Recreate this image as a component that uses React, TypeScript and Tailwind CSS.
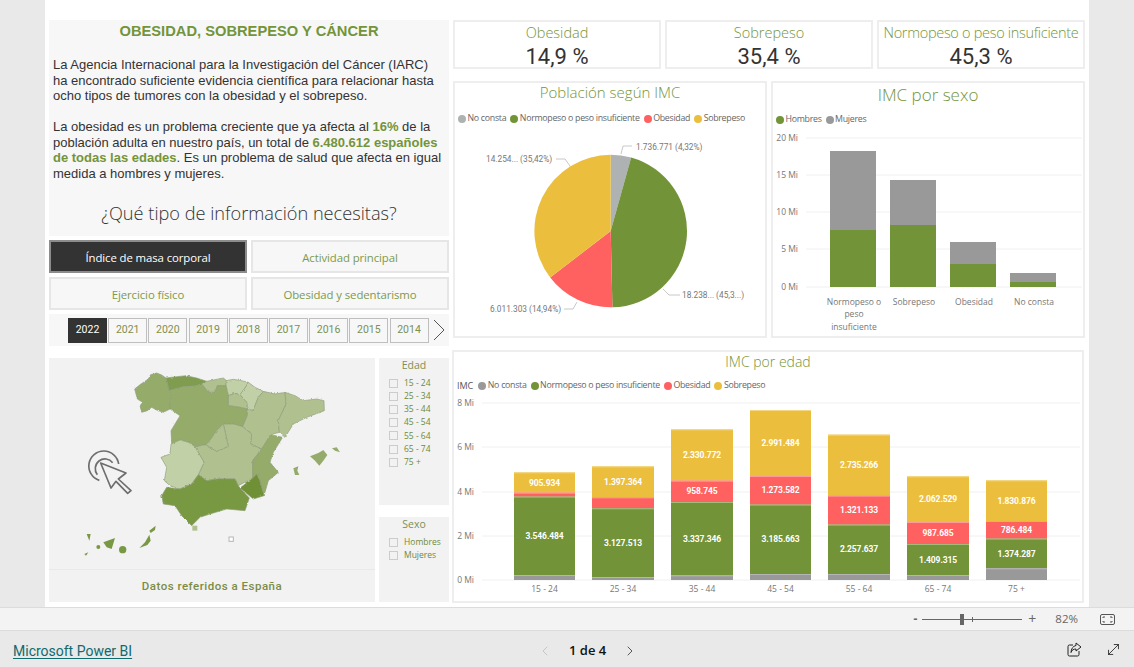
import { ChevronLeft, MoveDiagonal, ChevronRight } from "lucide-react";

const GREEN = "#729337";
const GRAY = "#999999";
const RED = "#ff6161";
const YELLOW = "#ebbe3e";

const segoe = "font-['Open_Sans',sans-serif]";
const din = "font-['Roboto',sans-serif]";

function Legend({ items, className }: { items: [string, string][]; className: string }) {
  return (
    <div className={`flex items-center whitespace-nowrap text-[8.8px] text-[#666666] ${segoe} ${className}`}>
      {items.map(([label, color]) => (
        <span key={label} className="mr-[4px] flex items-center gap-[1.5px]">
          <span className="h-[8px] w-[8px] rounded-full" style={{ backgroundColor: color }} />
          <span className="tracking-[-0.28px]">{label}</span>
        </span>
      ))}
    </div>
  );
}

function Kpi({ title, value, tight }: { title: string; value: string; tight?: boolean }) {
  return (
    <div className="flex h-[49px] w-[208px] flex-col items-center border-2 border-[#eeeeee] bg-white">
      <div className={`h-[21px] text-[14.5px] font-light leading-[21px] text-[#749439] ${segoe} ${tight ? "tracking-[-0.3px]" : ""}`}>
        {title}
      </div>
      <div className={`mt-[1px] text-[22px] leading-[25px] text-[#333333] ${din}`}>{value}</div>
    </div>
  );
}

function Slicer({ title, items, className }: { title: string; items: string[]; className: string }) {
  return (
    <div className={`w-[70px] bg-[#f2f2f2] ${className}`}>
      <div className={`h-[14px] text-center text-[10.5px] leading-[14px] text-[#7d8f52] ${segoe}`}>{title}</div>
      <div className="mt-[5px] pl-[10px]">
        {items.map((item) => (
          <div key={item} className="flex h-[13.1px] items-center gap-[6px]">
            <span className="h-[9px] w-[9px] border border-[#cccccc]" />
            <span className={`text-[8.5px] text-[#6f8a3a] ${segoe}`}>{item}</span>
          </div>
        ))}
      </div>
    </div>
  );
}

const years = ["2022", "2021", "2020", "2019", "2018", "2017", "2016", "2015", "2014"];

function SpainMap() {
  const c1 = "#c2d0a7";
  const c2 = "#b0c08f";
  const c3 = "#94ab6b";
  const c4 = "#7f9c4f";
  const c5 = "#799843";
  const c6 = "#6f9035";
  const regions: [string, string][] = [
    // Galicia, Asturias, Cantabria, Pais Vasco, Navarra, La Rioja
    ["224,75 240,62 265,45 272,32 290,27 305,33 318,42 328,80 335,95 330,115 330,135 310,145 290,138 275,130 262,140 245,145 240,125 248,115 232,105", c3],
    ["318,42 350,38 378,35 410,42 440,52 425,60 405,66 370,68 345,75 328,80", c4],
    ["425,60 440,52 465,47 490,42 500,50 498,65 472,65 465,85 445,85", c2],
    ["498,50 520,46 545,50 565,55 555,72 540,92 525,88 505,95 498,65", c1],
    ["565,55 585,70 610,82 595,100 585,125 578,140 562,130 560,115 540,92 555,72", c1],
    ["505,95 525,88 540,92 560,115 562,135 540,130 505,125", c2],
    // Castilla y Leon
    ["328,80 345,75 370,68 405,66 425,60 445,85 465,85 472,65 498,65 505,95 505,125 540,130 562,135 562,155 548,188 520,180 490,180 470,200 448,232 438,242 405,248 385,235 360,228 335,240 333,200 360,155 345,145 330,135 330,115 335,95", c3],
    // Aragon, Cataluna
    ["610,82 645,90 675,85 678,120 655,170 658,205 632,212 605,255 572,240 575,210 548,188 562,155 562,135 578,140 585,125 595,100", c2],
    ["675,85 705,95 730,110 770,105 792,110 793,140 740,160 700,180 675,220 658,205 655,170 678,120", c2],
    // Castilla-La Mancha, Madrid, Extremadura
    ["490,180 520,180 548,188 575,210 572,240 605,255 578,290 578,342 535,365 525,345 470,345 440,350 415,332 432,295 405,248 438,242 470,262 505,247", c2],
    ["490,180 505,247 470,262 438,242 448,232 470,200", c2],
    ["360,228 385,235 405,248 432,295 415,332 395,360 360,375 330,365 313,350 320,310 303,280 330,270 333,240", c1],
    // Valencia, Murcia, Andalucia
    ["632,212 668,220 640,265 630,295 655,325 625,350 612,395 600,350 590,330 578,342 578,290 605,255", c3],
    ["590,330 600,350 612,395 580,405 540,372 578,342", c6],
    ["415,332 440,350 470,345 525,345 535,365 540,372 568,402 555,440 500,435 450,450 420,460 395,485 365,455 345,425 310,420 305,395 320,370 360,375 395,360", c5],
  ];
  return (
    <svg width="326" height="211" viewBox="0 0 978 633" className="block">
      <defs>
        <filter id="rough">
          <feTurbulence type="fractalNoise" baseFrequency="0.12" numOctaves="2" seed="4" />
          <feDisplacementMap in="SourceGraphic" scale="7" xChannelSelector="R" yChannelSelector="G" />
        </filter>
      </defs>
      <g transform="translate(33,18)">
        <g filter="url(#rough)">
          {regions.map(([points, fill], i) => (
            <polygon key={i} points={points} fill={fill} stroke="#909f7a" strokeWidth="2" strokeLinejoin="round" />
          ))}
        </g>
        <rect x="397" y="485" width="15" height="15" fill={c2} />
        <rect x="507" y="519" width="13" height="13" fill="#ffffff" stroke="#b5b5b5" strokeWidth="3" />
        <g fill={c5}>
          <polygon points="80,510 92,510 88,530" />
          <circle cx="115" cy="549" r="6" />
          <polygon points="130,535 165,522 155,555 140,550" />
          <circle cx="188" cy="557" r="11" />
          <polygon points="238,552 255,535 268,512 272,530 262,543" />
          <polygon points="268,500 287,485 285,498 272,507" />
          <polygon points="73,570 85,565 78,575" />
        </g>
        <g fill={c3}>
          <polygon points="750,277 775,267 790,258 802,273 790,290 778,305 765,290" />
          <polygon points="816,253 830,250 840,265 825,260" />
          <polygon points="700,313 715,307 712,320 718,333 705,333" />
        </g>
        <g fill="none" stroke="#6e6e6e" strokeWidth="5">
          <path d="M118 349 A45 45 0 1 1 176 300" />
          <path d="M112 332 A28 28 0 1 1 158 296" />
          <polygon points="122,297 198,327 175,345 213,380 203,388 168,352 153,372" fill="#f2f2f2" strokeLinejoin="round" />
        </g>
      </g>
    </svg>
  );
}

function PieChart() {
  const cx = 610.7;
  const cy = 231;
  const r = 76.3;
  const slices: [number, string][] = [
    [4.32, "#aeb2b3"],
    [45.32, GREEN],
    [14.94, RED],
    [35.42, YELLOW],
  ];
  let acc = 0;
  const paths = slices.map(([pct, color]) => {
    const a0 = (acc / 100) * 2 * Math.PI;
    acc += pct;
    const a1 = (acc / 100) * 2 * Math.PI;
    const d = `M${cx} ${cy} L${cx + r * Math.sin(a0)} ${cy - r * Math.cos(a0)} A${r} ${r} 0 ${pct > 50 ? 1 : 0} 1 ${cx + r * Math.sin(a1)} ${cy - r * Math.cos(a1)} Z`;
    return <path key={color} d={d} fill={color} />;
  });
  const label = "font-['Roboto',sans-serif] text-[8.3px] fill-[#777777]";
  return (
    <svg width="310" height="212" className="block">
      <g transform="translate(-455,-124)">
        {paths}
        <g fill="none" stroke="#c8c8c8">
          <path d="M621 154 L623 146 L632 146" />
          <path d="M570 166 L565 159 L556 159" />
          <path d="M663 289 L669 295 L680 295" />
          <path d="M577 302 L573 309 L564 309" />
        </g>
        <text x="636" y="150" className={label}>1.736.771 (4,32%)</text>
        <text x="486" y="162" className={label}>14.254... (35,42%)</text>
        <text x="682" y="298" className={label}>18.238... (45,3...)</text>
        <text x="490" y="312" className={label}>6.011.303 (14,94%)</text>
      </g>
    </svg>
  );
}

function SexoChart() {
  const grid: [number, string][] = [
    [138, "20 Mi"],
    [175, "15 Mi"],
    [212, "10 Mi"],
    [249, "5 Mi"],
    [287, "0 Mi"],
  ];
  const bars = [
    [830, 151, 230],
    [890, 180, 225],
    [950, 242, 264],
    [1010, 273, 282],
  ];
  const text = "font-['Open_Sans',sans-serif] text-[8.5px] fill-[#777777]";
  return (
    <svg width="310" height="211" className="block">
      <g transform="translate(-773,-125)">
        {grid.map(([y, t]) => (
          <g key={t}>
            <line x1="806" x2="1082" y1={y} y2={y} stroke="#f0f0f0" strokeWidth="1" />
            <text x="798" y={y + 3} textAnchor="end" className={text}>{t}</text>
          </g>
        ))}
        {bars.map(([x, top, mid]) => (
          <g key={x}>
            <rect x={x} y={top} width="46" height={mid - top} fill={GRAY} />
            <rect x={x} y={mid} width="46" height={287 - mid} fill={GREEN} />
          </g>
        ))}
        <text textAnchor="middle" className={text}>
          <tspan x="854" y="305">Normopeso o</tspan>
          <tspan x="854" y="317">peso</tspan>
          <tspan x="854" y="330">insuficiente</tspan>
        </text>
        <text x="914" y="305" textAnchor="middle" className={text}>Sobrepeso</text>
        <text x="974" y="305" textAnchor="middle" className={text}>Obesidad</text>
        <text x="1034" y="305" textAnchor="middle" className={text}>No consta</text>
      </g>
    </svg>
  );
}

function EdadChart() {
  const grid: [number, string][] = [
    [403, "8 Mi"],
    [447, "6 Mi"],
    [492, "4 Mi"],
    [536, "2 Mi"],
    [580, "0 Mi"],
  ];
  // zoomed y stops: top of yellow, red, green, gray (divide by 3, add 345)
  const bars: { x: number; w: number; label: string; y: number[]; v: string[] }[] = [
    { x: 514, w: 61, label: "15 - 24", y: [382, 443, 455, 690], v: ["905.934", "", "3.546.484"] },
    { x: 592, w: 62, label: "25 - 34", y: [364, 457, 490, 696], v: ["1.397.364", "", "3.127.513"] },
    { x: 671, w: 62, label: "35 - 44", y: [253, 407, 471, 691], v: ["2.330.772", "958.745", "3.337.346"] },
    { x: 750, w: 61, label: "45 - 54", y: [195, 393, 479, 687], v: ["2.991.484", "1.273.582", "3.185.663"] },
    { x: 828, w: 62, label: "55 - 64", y: [269, 452, 539, 687], v: ["2.735.266", "1.321.133", "2.257.637"] },
    { x: 907, w: 62, label: "65 - 74", y: [394, 531, 597, 690], v: ["2.062.529", "987.685", "1.409.315"] },
    { x: 986, w: 61, label: "75 +", y: [406, 528, 581, 670], v: ["1.830.876", "786.484", "1.374.287"] },
  ];
  const colors = [YELLOW, RED, GREEN, GRAY];
  const strokes = ["#f3d782", "#ff9a9a", "#a3bb78", "#b5b5b5"];
  const axis = "font-['Open_Sans',sans-serif] text-[8.5px] fill-[#777777]";
  const value = "font-['Roboto',sans-serif] text-[8.5px] font-bold fill-white tracking-[-0.1px]";
  const py = (z: number) => z / 3 + 345;
  return (
    <svg width="628" height="210" className="block">
      <g transform="translate(-454,-391)">
        {grid.map(([y, t]) => (
          <g key={t}>
            <line x1="482" x2="1080" y1={y} y2={y} stroke="#f0f0f0" strokeWidth="1" />
            <text x="474" y={y + 3} textAnchor="end" className={axis}>{t}</text>
          </g>
        ))}
        {bars.map((b) => (
          <g key={b.x}>
            {b.y.map((z, i) => {
              const y0 = py(z);
              const y1 = i < 3 ? py(b.y[i + 1]) : 580;
              return (
                <g key={i}>
                  <rect x={b.x} y={y0} width={b.w} height={y1 - y0} fill={colors[i]} />
                  <line x1={b.x} x2={b.x + b.w} y1={y0 + 0.5} y2={y0 + 0.5} stroke={strokes[i]} />
                  {b.v[i] ? (
                    <text x={b.x + b.w / 2} y={(y0 + y1) / 2 + 3} textAnchor="middle" className={value}>{b.v[i]}</text>
                  ) : null}
                </g>
              );
            })}
            <text x={b.x + b.w / 2} y="592" textAnchor="middle" className={axis}>{b.label}</text>
          </g>
        ))}
      </g>
    </svg>
  );
}

function ChoiceButton({ label, active }: { label: string; active?: boolean }) {
  return (
    <div
      className={`flex h-[33px] items-center justify-center border-2 pt-[3px] text-[11.4px] tracking-[-0.1px] ${segoe} ${
        active ? "border-[#8c8c8c] bg-[#333333] text-white" : "border-[#e6e6e6] bg-[#f7f7f7] text-[#7d9a4c]"
      }`}
    >
      {label}
    </div>
  );
}

export default function App() {
  return (
    <div className="flex h-[667px] w-[1134px] flex-col overflow-hidden bg-[#e9e9e9]">
      {/* Report canvas */}
      <div className="mx-[45px] flex h-[607px] w-[1044px] gap-[4px] bg-white pl-[4px] pt-[20px]">
        {/* Left column */}
        <div className="flex w-[400px] flex-col">
          <div className="h-[216px] bg-[#f7f7f7] pl-[4px] font-['Liberation_Sans',sans-serif]">
            <h1 className="pr-[4px] pt-[3px] text-center text-[14.7px] font-bold leading-[17px] text-[#749439]">
              OBESIDAD, SOBREPESO Y CÁNCER
            </h1>
            <p className="mt-[17px] whitespace-nowrap text-[13px] leading-[15.5px] text-[#333333]">
              La Agencia Internacional para la Investigación del Cáncer (IARC)
              <br />
              ha encontrado suficiente evidencia científica para relacionar hasta
              <br />
              ocho tipos de tumores con la obesidad y el sobrepeso.
            </p>
            <p className="mt-[15.5px] whitespace-nowrap text-[13px] leading-[15.5px] text-[#333333]">
              La obesidad es un problema creciente que ya afecta al <b className="text-[#749439]">16%</b> de la
              <br />
              población adulta en nuestro país, un total de <b className="text-[#749439]">6.480.612 españoles</b>
              <br />
              <b className="text-[#749439]">de todas las edades</b>. Es un problema de salud que afecta en igual
              <br />
              medida a hombres y mujeres.
            </p>
            <div className={`mt-[18px] pr-[4px] text-center text-[18.2px] font-light leading-[28px] text-[#333333] ${segoe}`}>
              ¿Qué tipo de información necesitas?
            </div>
          </div>
          <div className="mt-[4px] grid grid-cols-[198px_198px] gap-[4px]">
            <ChoiceButton label="Índice de masa corporal" active />
            <ChoiceButton label="Actividad principal" />
            <ChoiceButton label="Ejercicio físico" />
            <ChoiceButton label="Obesidad y sedentarismo" />
          </div>
          <div className="mt-[4px] flex h-[32px] items-center gap-[1.2px] bg-[#f7f7f7] pl-[19px]">
            {years.map((y, i) => (
              <div
                key={y}
                className={`flex h-[25px] w-[39px] items-center justify-center border text-[10.5px] ${din} ${
                  i === 0 ? "border-[#333333] bg-[#333333] text-white" : "border-[#bfbfbf] bg-[#f7f7f7] text-[#7d8f52]"
                }`}
              >
                {y}
              </div>
            ))}
            <svg width="12" height="22" viewBox="0 0 12 22" fill="none" stroke="#555555" className="ml-[3px]">
              <path d="M1 1L11 11L1 21" />
            </svg>
          </div>
          <div className="mt-[12px] flex h-[244px] gap-[4px]">
            <div className="flex w-[326px] flex-col bg-[#f2f2f2]">
              <SpainMap />
              <div className={`flex flex-1 items-center justify-center border-t border-[#e9e9e9] pt-[1px] text-[11.5px] font-medium tracking-[0.5px] text-[#7c8c46] ${din}`}>
                Datos referidos a España
              </div>
            </div>
            <div className="flex w-[70px] flex-col">
              <Slicer
                title="Edad"
                items={["15 - 24", "25 - 34", "35 - 44", "45 - 54", "55 - 64", "65 - 74", "75 +"]}
                className="h-[147px]"
              />
              <Slicer title="Sexo" items={["Hombres", "Mujeres"]} className="mt-[12px] h-[85px]" />
            </div>
          </div>
        </div>

        {/* Right column */}
        <div className="flex w-[632px] flex-col">
          <div className="flex gap-[4px]">
            <Kpi title="Obesidad" value="14,9 %" />
            <Kpi title="Sobrepeso" value="35,4 %" />
            <Kpi title="Normopeso o peso insuficiente" value="45,3 %" tight />
          </div>
          <div className="mt-[12px] flex gap-[4px]">
            <div className="h-[257px] w-[314px] border-2 border-[#eeeeee]">
              <div className={`h-[20px] text-center text-[15px] font-light leading-[18px] text-[#749439] ${segoe}`}>
                Población según IMC
              </div>
              <Legend
                className="mt-[10px] h-[11px] pl-[3px]"
                items={[
                  ["No consta", "#aeb2b3"],
                  ["Normopeso o peso insuficiente", GREEN],
                  ["Obesidad", RED],
                  ["Sobrepeso", YELLOW],
                ]}
              />
              <PieChart />
            </div>
            <div className="h-[257px] w-[314px] border-2 border-[#eeeeee]">
              <div className={`h-[24px] text-center text-[17px] font-light leading-[24px] text-[#749439] ${segoe}`}>
                IMC por sexo
              </div>
              <Legend
                className="mt-[7px] h-[11px] pl-[3px]"
                items={[
                  ["Hombres", GREEN],
                  ["Mujeres", GRAY],
                ]}
              />
              <SexoChart />
            </div>
          </div>
          <div className="ml-[-1px] mt-[12px] h-[253px] w-[632px] border-2 border-[#eeeeee]">
            <div className={`h-[18px] text-center text-[14px] font-light leading-[20px] text-[#749439] ${segoe}`}>
              IMC por edad
            </div>
            <div className="mt-[10px] flex h-[11px] items-center">
              <span className={`ml-[3px] mr-[5px] text-[9px] text-[#555555] ${segoe}`}>IMC</span>
              <Legend
                className=""
                items={[
                  ["No consta", GRAY],
                  ["Normopeso o peso insuficiente", GREEN],
                  ["Obesidad", RED],
                  ["Sobrepeso", YELLOW],
                ]}
              />
            </div>
            <EdadChart />
          </div>
        </div>
      </div>

      {/* Zoom bar */}
      <div className="flex h-[24px] items-center justify-end border-y border-[#dcdcdc] bg-[#f3f3f3] pr-[19px] text-[#666666]">
        <span className="mr-[5px] text-[12px] font-bold leading-none">-</span>
        <div className="relative h-[1px] w-[100px] bg-[#666666]">
          <span className="absolute left-[38px] top-[-5px] h-[11px] w-[4px] bg-[#666666]" />
          <span className="absolute left-[50px] top-[-2px] h-[5px] w-[1px] bg-[#666666]" />
        </div>
        <span className={`ml-[6px] text-[14px] leading-none ${segoe}`}>+</span>
        <span className={`ml-[19px] text-[11.5px] ${segoe}`}>82%</span>
        <svg width="15" height="11" viewBox="0 0 15 11" fill="none" stroke="#555555" className="ml-[22px]">
          <rect x="0.5" y="0.5" width="14" height="10" rx="1.5" />
          <path d="M3 4V3H5M10 3H12V4M12 7V8H10M5 8H3V7" />
        </svg>
      </div>

      {/* Footer */}
      <div className="relative flex flex-1 items-center">
        <a className={`ml-[13px] mt-[5px] text-[14px] text-[#0f6b6f] underline underline-offset-2 ${din}`}>Microsoft Power BI</a>
        <div className="absolute left-[537px] top-[10px] flex items-center">
          <ChevronLeft className="h-[16px] w-[16px] text-[#bdbdbd]" strokeWidth={1.2} />
          <span className="ml-[16px] text-[13px] font-semibold text-[#111111] font-['Open_Sans',sans-serif]">1 de 4</span>
          <ChevronRight className="ml-[16px] h-[16px] w-[16px] text-[#333333]" strokeWidth={1.2} />
        </div>
        <svg width="15" height="15" viewBox="0 0 15 15" fill="none" stroke="#222222" className="absolute left-[1067px]">
          <path d="M6 3H2.5A1.5 1.5 0 0 0 1 4.5V12.5A1.5 1.5 0 0 0 2.5 14H10.5A1.5 1.5 0 0 0 12 12.5V9" />
          <path d="M9 1L14 5L9 9V7C6.5 7 5 8 4 10.5C4 7 6 4 9 3.5Z" />
        </svg>
        <MoveDiagonal className="absolute left-[1105px] h-[17px] w-[17px] text-[#222222]" strokeWidth={1.2} />
      </div>
    </div>
  );
}
